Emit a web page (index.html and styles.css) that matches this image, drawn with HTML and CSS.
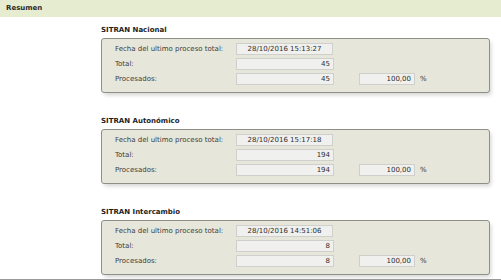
FILE: index.html
```html
<!DOCTYPE html>
<html lang="es">
  <head>
    <meta charset="UTF-8" />
    <title>Resumen</title>
    <link rel="stylesheet" href="styles.css">
  </head>
  <body>
    <div class="panel-header">Resumen</div>

    <div class="panel-body">
      <div class="group">
        <h3>SITRAN Nacional</h3>
        <div class="box">
          <div class="row">
            <span class="label">Fecha del ultimo proceso total:</span>
            <span class="field date">28/10/2016 15:13:27</span>
          </div>
          <div class="row">
            <span class="label">Total:</span>
            <span class="field num">45</span>
          </div>
          <div class="row">
            <span class="label">Procesados:</span>
            <span class="field num">45</span>
            <span class="field pct">100,00</span>
            <span class="unit">%</span>
          </div>
        </div>
      </div>

      <div class="group">
        <h3>SITRAN Autonómico</h3>
        <div class="box">
          <div class="row">
            <span class="label">Fecha del ultimo proceso total:</span>
            <span class="field date">28/10/2016 15:17:18</span>
          </div>
          <div class="row">
            <span class="label">Total:</span>
            <span class="field num">194</span>
          </div>
          <div class="row">
            <span class="label">Procesados:</span>
            <span class="field num">194</span>
            <span class="field pct">100,00</span>
            <span class="unit">%</span>
          </div>
        </div>
      </div>

      <div class="group">
        <h3>SITRAN Intercambio</h3>
        <div class="box">
          <div class="row">
            <span class="label">Fecha del ultimo proceso total:</span>
            <span class="field date">28/10/2016 14:51:06</span>
          </div>
          <div class="row">
            <span class="label">Total:</span>
            <span class="field num">8</span>
          </div>
          <div class="row">
            <span class="label">Procesados:</span>
            <span class="field num">8</span>
            <span class="field pct">100,00</span>
            <span class="unit">%</span>
          </div>
        </div>
      </div>
    </div>

    <div class="panel-footer"></div>
  </body>
</html>
```

FILE: styles.css
```css
body {
  margin: 0;
  font-family: "DejaVu Sans", Verdana, sans-serif;
  font-size: 7px;
  color: #333;
  background: #fff;
}

.panel-header {
  height: 17px;
  line-height: 17px;
  padding-left: 6px;
  background-color: #e6ecd0;
  font-weight: bold;
  color: #2b2b2b;
  font-size: 7px;
}

.panel-body {
  padding: 7px 11px 0 101px;
}

.group {
  margin-bottom: 22px;
}

.group:last-child {
  margin-bottom: 0;
}

.group h3 {
  margin: 0 0 2px 0;
  height: 12px;
  line-height: 12px;
  font-size: 7px;
  font-weight: bold;
  color: #1e1e1e;
}

.box {
  height: 55px;
  box-sizing: border-box;
  padding: 4px 0 0 13px;
  background-color: #e6e7da;
  border: 1px solid #8f8f8a;
  border-radius: 3px;
  box-shadow: 2px 3px 4px -1px rgba(0, 0, 0, 0.18);
  display: flex;
  flex-direction: column;
  gap: 3px;
}

.row {
  display: flex;
  align-items: center;
  height: 12px;
}

.label {
  width: 121px;
  color: #3c3c3c;
}

.field {
  box-sizing: border-box;
  height: 12px;
  line-height: 10px;
  background-color: #f0f0ee;
  border: 1px solid #cfcfcb;
  padding: 0 3px;
  color: #2e2e2e;
}

.field.date {
  width: 97px;
  text-align: center;
}

.field.num {
  width: 98px;
  text-align: right;
}

.field.pct {
  width: 56px;
  margin-left: 25px;
  text-align: right;
}

.unit {
  margin-left: 5px;
}

.panel-footer {
  margin-top: 4px;
  height: 2px;
  background-color: #9a9a9a;
}
```
